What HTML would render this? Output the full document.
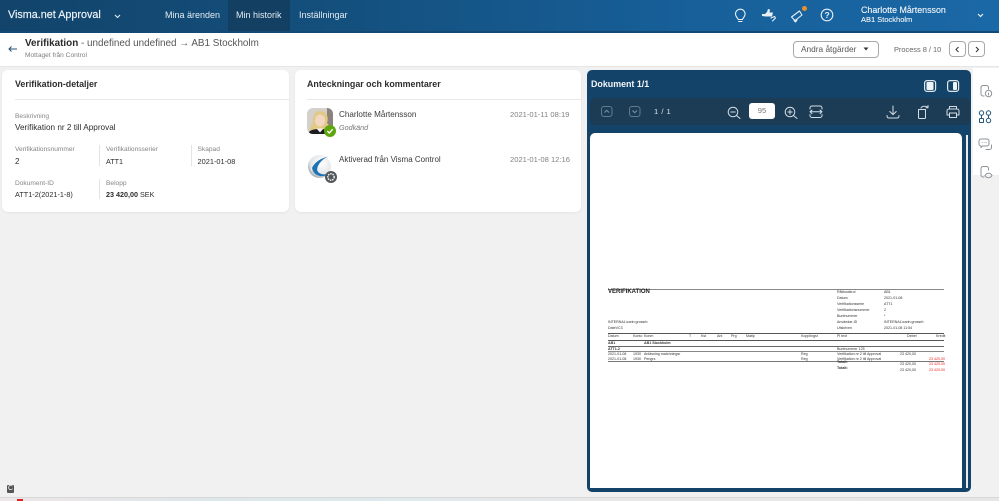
<!DOCTYPE html>
<html lang="sv"><head><meta charset="utf-8"><title>Visma.net Approval</title>
<style>
html,body{margin:0;padding:0;width:999px;height:501px;overflow:hidden;background:#f1f1f1;font-family:"Liberation Sans",sans-serif;color:#2b2b2b}
body{filter:blur(.3px)}
*{box-sizing:border-box}
.a{position:absolute;white-space:nowrap}
.lbl{font-size:6.6px;color:#858585}
.val{font-size:7.4px;color:#2c2c2c}
.h{font-size:8.9px;font-weight:700;color:#2d2d2d}
.sep{position:absolute;width:1px;background:#e4e4e4}
.card{position:absolute;background:#fff;border-radius:6px;box-shadow:0 1px 2px rgba(0,0,0,.06)}
svg{position:absolute;overflow:visible}
.w{fill:none;stroke:#e8f0f6;stroke-width:1.1;stroke-linecap:round;stroke-linejoin:round}
.t{fill:none;stroke:#d5dde3;stroke-width:1;stroke-linecap:round;stroke-linejoin:round}
.g{fill:none;stroke:#8d9499;stroke-width:1;stroke-linecap:round;stroke-linejoin:round}
.rp{position:absolute;font-size:3.6px;color:#333;white-space:nowrap;line-height:5px}
.rl{position:absolute;background:#666}
i{display:block;height:1px}
</style></head><body>

<!-- header -->
<div class="a" style="left:0;top:0;width:999px;height:32px;background:linear-gradient(90deg,#12446b 0,#14507e 35%,#17609a 70%,#1a68a6 100%)"></div>
<div class="a" style="left:0;top:31px;width:999px;height:2px;background:#124a75"></div>
<div class="a" style="left:228px;top:0;width:62px;height:31px;background:#123f62"></div>
<div class="a" style="left:8px;top:8.500px;font-size:10.800px;color:#f2f6f9;-webkit-text-stroke:.15px #f2f6f9">Visma.net Approval</div>
<svg style="left:114px;top:14px" width="8" height="5"><path d="M1 1l2.500 2.500L6 1" fill="none" stroke="#e8f0f6" stroke-width="1.100"/></svg>
<div class="a" style="left:165px;top:10px;font-size:9px;color:#e4edf3">Mina ärenden</div>
<div class="a" style="left:236px;top:10px;font-size:9px;color:#e4edf3">Min historik</div>
<div class="a" style="left:299px;top:10px;font-size:9px;color:#e4edf3">Inställningar</div>

<svg style="left:734px;top:8px" width="14" height="16"><path class="w" d="M4.200 11.500C3.600 9.600 1.500 8.600 1.500 6a4.800 4.800 0 0 1 9.600 0c0 2.600-2 3.600-2.600 5.500zM4.600 13.500h3.400" /></svg>
<svg style="left:761px;top:8px" width="16" height="14"><path d="M1 6h3l2-2 1-3 2 .5-.5 3H12l-1 4H5L1 8z" fill="#e8f0f6"/><path class="w" d="M10 10l3.500-1.500 1 1.500-3 3"/></svg>
<svg style="left:790px;top:8px" width="16" height="15"><path class="w" d="M1.500 9l8-6 2.500 4-7 5.500zM4 12.500l1.500 1.500 1.500-2"/></svg>
<div class="a" style="left:802px;top:6px;width:5px;height:5px;border-radius:50%;background:#e8912d"></div>
<svg style="left:820px;top:8px" width="14" height="14"><circle class="w" cx="7" cy="7" r="5.800"/></svg>
<div class="a" style="left:824.500px;top:10px;font-size:8.500px;font-weight:700;color:#e8f0f6">?</div>
<div class="a" style="left:861px;top:5px;font-size:8.900px;color:#f2f6f9;-webkit-text-stroke:.1px #f2f6f9">Charlotte Mårtensson</div>
<div class="a" style="left:861px;top:15px;font-size:7.500px;color:#f2f6f9;-webkit-text-stroke:.1px #f2f6f9">AB1 Stockholm</div>
<svg style="left:977px;top:13px" width="8" height="5"><path d="M1 1l2.500 2.500L6 1" fill="none" stroke="#e8f0f6" stroke-width="1.200"/></svg>

<!-- sub header -->
<div class="a" style="left:0;top:33px;width:999px;height:34px;background:#fff;border-bottom:1px solid #e6e6e6"></div>
<svg style="left:8px;top:45px" width="10" height="8"><path d="M9 4H1M3.500 1.500L1 4l2.500 2.500" fill="none" stroke="#24507a" stroke-width="1"/></svg>
<div class="a" style="left:25px;top:38px;font-size:9.900px;color:#555"><b style="color:#2a2a2a">Verifikation</b> - undefined undefined → AB1 Stockholm</div>
<div class="a" style="left:25px;top:52px;font-size:6.600px;color:#808080">Mottaget från Control</div>

<div class="a" style="left:793px;top:41px;width:86px;height:17px;border:1px solid #a8a8a8;border-radius:4px;background:#fff"></div>
<div class="a" style="left:801px;top:44px;font-size:8.300px;color:#555">Andra åtgärder</div>
<svg style="left:863px;top:47px" width="6" height="4"><path d="M.5.5h5L3 3.500z" fill="#333"/></svg>
<div class="a" style="left:894px;top:45px;font-size:7.400px;color:#666">Process 8 / 10</div>
<div class="a" style="left:949px;top:41px;width:17px;height:16px;border:1px solid #a8a8a8;border-radius:4px"></div>
<div class="a" style="left:968px;top:41px;width:17px;height:16px;border:1px solid #a8a8a8;border-radius:4px"></div>
<svg style="left:955px;top:46px" width="5" height="7"><path d="M3.500 1L1 3.500 3.500 6" fill="none" stroke="#333"/></svg>
<svg style="left:975px;top:46px" width="5" height="7"><path d="M1 1l2.500 2.500L1 6" fill="none" stroke="#333"/></svg>

<!-- card 1 -->
<div class="card" style="left:2px;top:70px;width:287px;height:142px"></div>
<div class="a h" style="left:15px;top:79px">Verifikation-detaljer</div>
<div class="a" style="left:15px;top:99px;width:274px;height:1px;background:#e8e8e8"></div>
<div class="a lbl" style="left:15px;top:113px">Beskrivning</div>
<div class="a val" style="left:15px;top:122.500px;font-size:8.200px">Verifikation nr 2 till Approval</div>
<div class="a lbl" style="left:15px;top:146px">Verifikationsnummer</div>
<div class="a val" style="left:15px;top:156.500px;font-size:8px">2</div>
<div class="sep" style="left:99px;top:145px;height:21px"></div>
<div class="a lbl" style="left:106px;top:146px">Verifikationsserier</div>
<div class="a val" style="left:106px;top:156.500px;font-size:7.200px">ATT1</div>
<div class="sep" style="left:191px;top:145px;height:21px"></div>
<div class="a lbl" style="left:197.500px;top:146px">Skapad</div>
<div class="a val" style="left:197.500px;top:156.500px">2021-01-08</div>
<div class="a lbl" style="left:15px;top:180px">Dokument-ID</div>
<div class="a val" style="left:15px;top:189.500px;font-size:7.300px">ATT1-2(2021-1-8)</div>
<div class="sep" style="left:99px;top:179px;height:20px"></div>
<div class="a lbl" style="left:106px;top:180px">Belopp</div>
<div class="a val" style="left:106px;top:189.500px;font-size:7.200px"><b>23 420,00</b> SEK</div>

<!-- card 2 -->
<div class="card" style="left:295px;top:70px;width:286px;height:142px"></div>
<div class="a h" style="left:307px;top:79px">Anteckningar och kommentarer</div>
<div class="a" style="left:307px;top:99px;width:274px;height:1px;background:#e8e8e8"></div>

<svg style="left:307px;top:108px" width="30" height="30">
<defs><clipPath id="c"><rect width="26" height="26" rx="6"/></clipPath></defs>
<g clip-path="url(#c)"><rect width="26" height="26" fill="#d4d0cc"/><rect x="20" width="6" height="26" fill="#8a837d"/>
<path d="M3 24c0-5 1-7 3-9-1-5 1-12 7-12 7 0 9 7 7 12 2 2 3 4 3 9z" fill="#e2c985"/><ellipse cx="13" cy="12.500" rx="5" ry="6" fill="#f2d8c2"/><path d="M1 26c1-4 6-5 12-5s11 1 12 5z" fill="#1d1d20"/><path d="M9.500 20.500l3.500 4 3.500-4z" fill="#f2f2f2"/></g>
<circle cx="23" cy="23" r="6" fill="#5ea60e"/><path d="M20.300 23l2 2 3.400-3.800" fill="none" stroke="#fff" stroke-width="1.400"/></svg>
<div class="a val" style="left:339px;top:109.500px;font-size:8.100px;color:#3a3a3a">Charlotte Mårtensson</div>
<div class="a" style="left:339px;top:123px;font-size:7.200px;font-style:italic;color:#777">Godkänd</div>
<div class="a" style="left:510px;top:109.500px;font-size:7.600px;color:#808080">2021-01-11 08:19</div>

<svg style="left:308px;top:154px" width="30" height="30">
<defs><radialGradient id="b" cx=".6" cy=".35" r=".7"><stop offset="0" stop-color="#fff"/><stop offset=".7" stop-color="#e2e5e8"/><stop offset="1" stop-color="#9da3a9"/></radialGradient></defs>
<circle cx="11.500" cy="12.500" r="11.500" fill="url(#b)"/><path d="M20 2C11 3 4 9 3 17c3-5 5-8 8-10 3-2 6-3 9-5z" fill="#fff"/><path d="M20 2.500C11 5 6 9 4 14c1 4 3 7 8 8 3 .5 6 0 8-2-5 1-9 0-10.500-3-1.500-4 3-11 10.500-14.500z" fill="#1f73b4"/>
<circle cx="23" cy="23" r="6" fill="#53585d"/><circle cx="23" cy="23" r="3.200" fill="none" stroke="#fff" stroke-width="1.300" stroke-dasharray="1.500 .8"/></svg>
<div class="a val" style="left:339px;top:154.500px;font-size:8px;color:#3a3a3a">Aktiverad från Visma Control</div>
<div class="a" style="left:510px;top:154.500px;font-size:7.600px;color:#808080">2021-01-08 12:16</div>

<!-- doc panel -->
<div class="a" style="left:587px;top:70px;width:384px;height:422px;background:#134369;border-radius:5px"></div>
<div class="a" style="left:591px;top:79px;font-size:8.900px;font-weight:700;color:#f2f6f9">Dokument 1/1</div>
<svg style="left:924px;top:80px" width="13" height="12"><rect x=".6" y=".6" width="11" height="10.800" rx="2.500" fill="none" stroke="#dfe8ee" stroke-width="1.200"/><rect x="2.500" y="2" width="7" height="8" rx="1" fill="#eef3f6"/></svg>
<svg style="left:947px;top:80px" width="13" height="12"><rect x=".6" y=".6" width="11" height="10.800" rx="2.500" fill="none" stroke="#dfe8ee" stroke-width="1.200"/><rect x="6" y="2" width="4" height="8" rx="1" fill="#eef3f6"/></svg>
<div class="a" style="left:590px;top:98px;width:380px;height:27px;background:#1c3c56;border-radius:5px"></div>
<svg style="left:601px;top:106px" width="12" height="12"><rect x=".5" y=".5" width="10.500" height="10" rx="2.500" fill="none" stroke="#5f7c91"/><path d="M3.500 6.500l2.200-2.200L8 6.500" fill="none" stroke="#7d96a8"/></svg>
<svg style="left:629px;top:106px" width="12" height="12"><rect x=".5" y=".5" width="10.500" height="10" rx="2.500" fill="none" stroke="#5f7c91"/><path d="M3.500 4.500l2.200 2.200L8 4.500" fill="none" stroke="#7d96a8"/></svg>
<div class="a" style="left:654px;top:107px;font-size:7.600px;color:#dfe7ec;letter-spacing:.5px">1 / 1</div>
<svg style="left:727px;top:106px" width="15" height="15"><circle class="t" cx="6" cy="6" r="4.800"/><path class="t" d="M3.800 6h4.400M9.500 9.500l3.500 3" /></svg>
<div class="a" style="left:749px;top:103px;width:26px;height:16px;background:#fff;border-radius:3px;text-align:center;font-size:7.600px;line-height:16px;color:#777">95</div>
<svg style="left:784px;top:106px" width="15" height="15"><circle class="t" cx="6" cy="6" r="4.800"/><path class="t" d="M3.800 6h4.400M6 3.800v4.400M9.500 9.500l3.500 3"/></svg>
<svg style="left:809px;top:105px" width="15" height="14"><path class="t" d="M1 4V3a2 2 0 0 1 2-2h8a2 2 0 0 1 2 2v1M1 9.500v1a2 2 0 0 0 2 2h8a2 2 0 0 0 2-2v-1M1 6.800h12M3 5L1 6.800l2 1.800M11 5l2 1.800-2 1.800"/></svg>
<svg style="left:886px;top:105px" width="15" height="15"><path class="t" d="M7 1v8.500M3.800 6.500L7 9.700l3.200-3.200M1 10.500c0 1.500.8 2.500 2 2.500h8c1.200 0 2-1 2-2.500"/></svg>
<svg style="left:917px;top:105px" width="15" height="15"><path class="t" d="M1.500 4.500h7v8a1 1 0 0 1-1 1h-5a1 1 0 0 1-1-1zM4 3c1-2 5-2.500 7-.5M11 .5v2.200H9"/></svg>
<svg style="left:946px;top:105px" width="15" height="14"><path class="t" d="M3.500 4V1.500h7V4M1 10V6a2 2 0 0 1 2-2h8a2 2 0 0 1 2 2v4h-2.500M3.500 10H1M3.500 8h7v4.500h-7z"/></svg>

<!-- pdf page -->
<div class="a" style="left:590px;top:133px;width:372px;height:355px;background:#fff;border-radius:5px 5px 0 0"></div>
<div class="a" style="left:966px;top:135px;width:2px;height:353px;background:#e8ecef"></div>

<div class="rl" style="left:608px;top:289px;width:336px;height:1px;background:#888"></div>
<div class="a" style="left:608px;top:289px;font-size:6px;font-weight:700;color:#222">VERIFIKATION</div>
<div class="rp" style="left:837px;top:290px">Råtbooktrol<br><i></i>Datum<br><i></i>Verifikationsserie<br><i></i>Verifikationsnummer<br><i></i>Buntnummer<br><i></i>Användar-ID<br><i></i>Utskriven</div>
<div class="rp" style="left:884px;top:290px">AB1<br><i></i>2021-01-08<br><i></i>ATT1<br><i></i>2<br><i></i>*<br><i></i>INTERNAL\carin.grossrb<br><i></i>2021-01-08 11:54</div>
<div class="rp" style="left:608px;top:320px">INTERNAL\carin.grossrb</div>
<div class="rp" style="left:608px;top:326px">DateVC3</div>
<div class="rl" style="left:608px;top:333px;width:336px;height:1px;background:#555"></div>
<div class="rp" style="left:608px;top:334px;width:336px;height:5px"><span style="position:absolute;left:0">Datum</span><span style="position:absolute;left:25px">Konto</span><span style="position:absolute;left:36px">Konm</span><span style="position:absolute;left:81px">T</span><span style="position:absolute;left:93px">Kst</span><span style="position:absolute;left:109px">Ant</span><span style="position:absolute;left:123px">Prg</span><span style="position:absolute;left:138px">Matlp</span><span style="position:absolute;left:193px">Kopplingsr</span><span style="position:absolute;left:229px">Pl text</span><span style="position:absolute;left:299px">Debet</span><span style="position:absolute;left:328px">Kredit</span></div>
<div class="rl" style="left:608px;top:340px;width:336px;height:1px;background:#555"></div>
<div class="rp" style="left:608px;top:341px;font-weight:700">AB1<span style="position:absolute;left:36px">AB1 Stockholm</span></div>
<div class="rl" style="left:608px;top:346px;width:336px;height:1px;background:#666"></div>
<div class="rp" style="left:608px;top:347px;font-weight:700">ATT1-2</div>
<div class="rp" style="left:837px;top:347px">Buntnummer 125</div>
<div class="rl" style="left:608px;top:351px;width:336px;height:1px;background:#888"></div>
<div class="rp" style="left:608px;top:352px">2021-01-08<span style="position:absolute;left:25px">1930</span><span style="position:absolute;left:36px">Anläsning matchningsr</span><span style="position:absolute;left:193px">Reg</span><span style="position:absolute;left:229px">Verifikation nr 2 till Approval</span><span style="position:absolute;left:292px">23 420,00</span></div>
<div class="rp" style="left:608px;top:357px">2021-01-08<span style="position:absolute;left:25px">1930</span><span style="position:absolute;left:36px">Pengrs</span><span style="position:absolute;left:193px">Reg</span><span style="position:absolute;left:229px">Verifikation nr 2 till Approval</span><span style="position:absolute;left:321px;color:#e22">23 420,00</span></div>
<div class="rl" style="left:608px;top:361px;width:336px;height:1px;background:#777"></div>
<div class="rp" style="left:837px;top:360px;font-weight:700">Totalt:</div>
<div class="rp" style="left:900px;top:362px">23 420,00<span style="position:absolute;left:29px;color:#e22">23 420,00</span></div>
<div class="rp" style="left:837px;top:366px;font-weight:700">Totalt:</div>
<div class="rp" style="left:900px;top:368px">23 420,00<span style="position:absolute;left:29px;color:#e22">23 420,00</span></div>

<!-- right rail -->
<div class="a" style="left:973px;top:68px;width:26px;height:107px;background:#fff"></div>
<svg style="left:979px;top:84px" width="14" height="14"><path class="g" d="M7 1.500H4A2 2 0 0 0 2 3.500v6.500a2 2 0 0 0 2 2h1M7.500 1.500a2 2 0 0 1 2 2v1.500"/><circle class="g" cx="9.500" cy="9.500" r="3.200"/><path class="g" d="M9.500 9v2"/></svg>
<svg style="left:978px;top:110px" width="14" height="14"><g style="fill:none;stroke:#1f5478;stroke-width:1"><circle cx="3.500" cy="3" r="2.200"/><circle cx="10.500" cy="3" r="2.200"/><circle cx="10.500" cy="10.500" r="2.200"/><rect x="1.500" y="8.500" width="4" height="4" rx=".8"/><path d="M3.500 5.200v3.300M10.500 5.200v3.100"/></g></svg>
<svg style="left:978px;top:138px" width="15" height="14"><path class="g" d="M3 1h6a2 2 0 0 1 2 2v3a2 2 0 0 1-2 2H4.500L3 9.500V8a2 2 0 0 1-2-2V3a2 2 0 0 1 2-2zM8 11.500h3.500a2 2 0 0 0 2-2V7"/><path d="M3.800 4.500h.7M5.800 4.500h.7M7.800 4.500h.7" stroke="#8d9499"/></svg>
<svg style="left:979px;top:165px" width="14" height="14"><path class="g" d="M7 1.500H4A2 2 0 0 0 2 3.500v6.500a2 2 0 0 0 2 2h1M7.500 1.500a2 2 0 0 1 2 2v1.500M6 10.500c1-1.700 2.200-2.200 3.500-2.200s2.500.5 3.500 2.200c-1 1.700-2.200 2.200-3.500 2.200S7 12.200 6 10.500z"/></svg>

<!-- bottom -->
<div class="a" style="left:7px;top:485px;width:7px;height:8px;background:#555;border-radius:1px;color:#fff;font-size:7px;line-height:8px;text-align:center">C</div>
<div class="a" style="left:0;top:497px;width:999px;height:4px;background:linear-gradient(90deg,#efe6e8 0,#dde6ea 20%,#dfe9ee 40%,#e8e8e8 60%,#e6e6e6 100%);border-top:1px solid #d8d8d8"></div>
<div class="a" style="left:17px;top:499px;width:6px;height:2px;background:#d22"></div>
</body></html>
